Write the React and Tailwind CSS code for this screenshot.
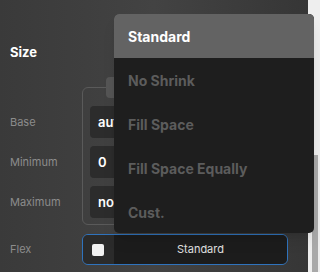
import React from "react";

const options = ["No Shrink", "Fill Space", "Fill Space Equally", "Cust."];

export default function App() {
  return (
    <div
      className="relative flex w-[320px] h-[272px] overflow-hidden"
      style={{ fontFamily: "Inter, 'Noto Sans', sans-serif" }}
    >
      <div className="flex-1 bg-gradient-to-r from-[#3a3a3a] via-[#434343] to-[#363636] pl-[10px] pt-[44px]">
        <div className="h-4 text-[13px] leading-4 font-bold text-white">Size</div>

        <div className="flex mt-[27px]">
          <div className="w-[72px] pt-[19px] flex flex-col gap-2 text-[11px] text-[#8c8c8c]">
            <div className="h-8 leading-8">Base</div>
            <div className="h-8 leading-8">Minimum</div>
            <div className="h-8 leading-8">Maximum</div>
          </div>
          <div className="relative w-[206px] border border-[#5a5a5a] rounded-md pt-[18px] pb-[6px] pl-[7px] pr-[7px] flex flex-col gap-2">
            <div className="absolute -top-[11px] left-[23px] w-[60px] h-[21px] rounded bg-[#555555]" />
            <div className="h-8 rounded bg-[#2c2c2c] pl-2 text-[13px] leading-8 font-semibold text-white">auto</div>
            <div className="h-8 rounded bg-[#2c2c2c] pl-2 text-[13px] leading-8 font-semibold text-white">0</div>
            <div className="h-8 rounded bg-[#2c2c2c] pl-2 text-[13px] leading-8 font-semibold text-white">none</div>
          </div>
        </div>

        <div className="flex mt-[9px]">
          <div className="w-[72px] text-[11px] leading-[31px] text-[#8c8c8c]">Flex</div>
          <div className="flex w-[206px] h-[31px] border border-[#2f73bd] rounded-md overflow-hidden">
            <div className="w-[31px] bg-[#2b2b2b] flex items-center pl-[9px]">
              <div className="w-3 h-3 rounded-[2px] bg-[#f2f2f2]" />
            </div>
            <div className="flex-1 bg-[#1c1c1c] flex items-center justify-center text-[11px] text-[#e0e0e0]">
              Standard
            </div>
          </div>
        </div>
      </div>

      <div className="w-[12px] bg-[#eeeeee] flex flex-col pt-[155px]">
        <div className="ml-[4px] w-[6px] flex-1 bg-[#a9a9a9]" />
      </div>

      <div className="absolute left-[114px] top-[14px] w-[200px] h-[219px] rounded-[5px] bg-[#1e1e1e] overflow-hidden shadow-lg">
        <div className="h-[44px] bg-[#636363] pl-[14px] flex items-center text-[14px] font-bold text-white">
          Standard
        </div>
        {options.map((o) => (
          <div key={o} className="h-[44px] pl-[14px] flex items-center text-[14px] font-bold text-[#5c5c5c]">
            {o}
          </div>
        ))}
      </div>
    </div>
  );
}
